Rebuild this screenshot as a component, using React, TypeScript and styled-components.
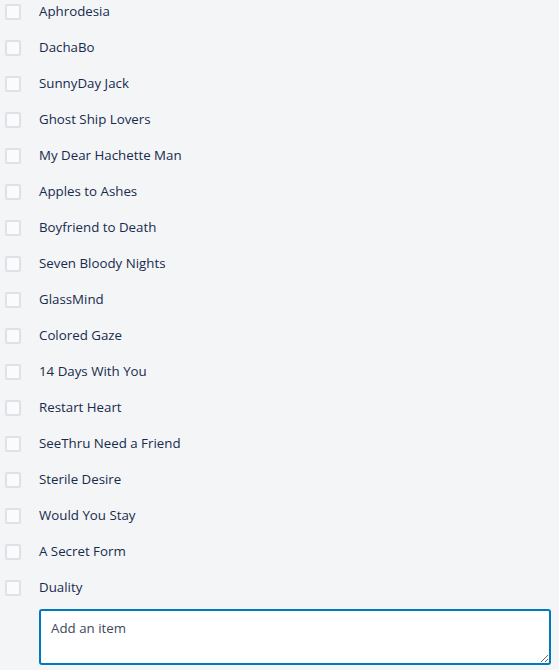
import React from "react";
import styled, { createGlobalStyle } from "styled-components";

const Global = createGlobalStyle`
  html, body { margin: 0; padding: 0; background: #f4f5f7; }
  body { font-family: "Segoe UI", "Open Sans", "Liberation Sans", sans-serif; }
`;

const Page = styled.div`
  width: 559px;
  height: 670px;
  background: #f4f5f7;
  overflow: hidden;
`;

const List = styled.ul`
  list-style: none;
  margin: 0;
  padding: 0;
  display: flex;
  flex-direction: column;
  gap: 14px;
`;

const Row = styled.li`
  display: flex;
  align-items: center;
  height: 22px;
`;

const Box = styled.span`
  box-sizing: border-box;
  width: 16px;
  height: 16px;
  margin: 2px 18px 0 5px;
  border: 2px solid #dfe1e6;
  border-radius: 2px;
  background: #fafbfc;
  flex: none;
`;

const Label = styled.span`
  font-family: "Open Sans", sans-serif;
  font-size: 13.3px;
  color: #172b4d;
  line-height: 22px;
`;

const Composer = styled.div`
  padding: 11px 8px 0 39px;
`;

const Input = styled.textarea`
  display: block;
  box-sizing: border-box;
  width: 512px;
  height: 56px;
  border: 2px solid #0079bf;
  border-radius: 3px;
  background: #fff;
  padding: 7px 10px;
  font-family: "Open Sans", sans-serif;
  font-size: 13.3px;
  line-height: 20px;
  color: #172b4d;
  outline: none;
  &::placeholder { color: #3d4a5e; }
`;

const items = [
  "Aphrodesia",
  "DachaBo",
  "SunnyDay Jack",
  "Ghost Ship Lovers",
  "My Dear Hachette Man",
  "Apples to Ashes",
  "Boyfriend to Death",
  "Seven Bloody Nights",
  "GlassMind",
  "Colored Gaze",
  "14 Days With You",
  "Restart Heart",
  "SeeThru Need a Friend",
  "Sterile Desire",
  "Would You Stay",
  "A Secret Form",
  "Duality",
];

export default function App() {
  return (
    <Page>
      <Global />
      <List>
        {items.map((t) => (
          <Row key={t}>
            <Box />
            <Label>{t}</Label>
          </Row>
        ))}
      </List>
      <Composer>
        <Input placeholder="Add an item" />
      </Composer>
    </Page>
  );
}
